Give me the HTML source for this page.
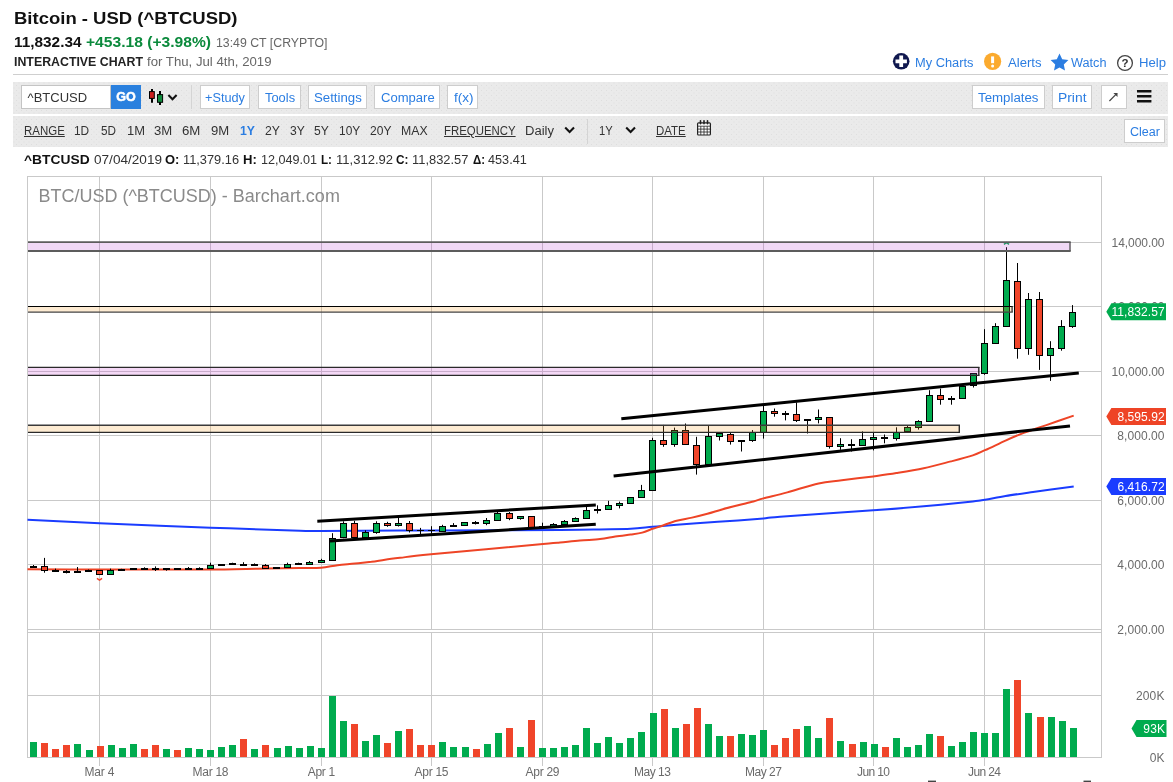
<!DOCTYPE html>
<html lang="en"><head><meta charset="utf-8"><title>Bitcoin - USD (^BTCUSD) Interactive Chart</title>
<style>
html,body{margin:0;padding:0;background:#fff;}
body{width:1173px;height:782px;position:relative;overflow:hidden;font-family:"Liberation Sans", sans-serif;}
.t{position:absolute;white-space:nowrap;transform-origin:0 0;}
.b{position:absolute;display:block;}
</style></head><body><div id="wrap" style="position:absolute;left:0;top:0;width:1173px;height:782px;will-change:transform;">
<header class="quote-header">
<span class="t" style="left:13.90px;top:10px;font-size:17.25px;line-height:17.25px;color:#111;font-weight:bold;transform:scaleX(1.0723);">Bitcoin - USD (^BTCUSD)</span>
<span class="t" style="left:13.90px;top:35px;font-size:14.5px;line-height:14.5px;color:#111;font-weight:bold;transform:scaleX(1.0595);">11,832.34</span>
<span class="t" style="left:86.30px;top:35px;font-size:14.5px;line-height:14.5px;color:#0b8a3c;font-weight:bold;transform:scaleX(1.0768);">+453.18 (+3.98%)</span>
<span class="t" style="left:216.30px;top:37px;font-size:12px;line-height:12px;color:#666;transform:scaleX(1.0256);">13:49 CT [CRYPTO]</span>
<span class="t" style="left:13.90px;top:56px;font-size:12px;line-height:12px;color:#222;font-weight:bold;transform:scaleX(1.0293);">INTERACTIVE CHART</span>
<span class="t" style="left:146.50px;top:56px;font-size:12px;line-height:12px;color:#666;transform:scaleX(1.1000);">for Thu, Jul 4th, 2019</span>
<svg class="b" style="left:892px;top:52px" width="19" height="19" viewBox="0 0 19 19"><circle cx="9.2" cy="9.3" r="8.3" fill="#10184f"/><path d="M9.2 3.6v11.4M3.5 9.3h11.4" stroke="#fff" stroke-width="3.8"/></svg>
<span class="t" style="left:915.00px;top:57px;font-size:12.5px;line-height:12.5px;color:#2b7de1;transform:scaleX(1.0272);">My Charts</span>
<svg class="b" style="left:983px;top:52px" width="20" height="19" viewBox="0 0 20 19"><circle cx="9.6" cy="9.3" r="8.6" fill="#fbaa2e"/><path d="M9.6 4.4v6.8" stroke="#fff" stroke-width="3"/><circle cx="9.6" cy="13.9" r="1.5" fill="#fff"/></svg>
<span class="t" style="left:1007.50px;top:57px;font-size:12.5px;line-height:12.5px;color:#2b7de1;transform:scaleX(1.0485);">Alerts</span>
<svg class="b" style="left:1050px;top:53px" width="19" height="18" viewBox="0 0 19 18"><path d="M9.5 0.6l2.7 5.7 6.2 0.8-4.6 4.3 1.2 6.2-5.5-3.1-5.5 3.1 1.2-6.2L0.6 7.1l6.2-0.8z" fill="#2b7de1"/></svg>
<span class="t" style="left:1071.20px;top:57px;font-size:12.5px;line-height:12.5px;color:#2b7de1;transform:scaleX(1.0154);">Watch</span>
<svg class="b" style="left:1116px;top:53.5px" width="18" height="18" viewBox="0 0 18 18"><circle cx="9" cy="9" r="7.4" fill="#fff" stroke="#444" stroke-width="1.3"/><text x="9" y="13.2" font-family="Liberation Sans, sans-serif" font-size="11.5" font-weight="bold" fill="#333" text-anchor="middle">?</text></svg>
<span class="t" style="left:1138.70px;top:57px;font-size:12.5px;line-height:12.5px;color:#2b7de1;transform:scaleX(1.0503);">Help</span>
</header>
<div class="chart-toolbar">
<div class="b" style="left:13px;top:74px;width:1155px;height:1px;background:#cfcfcf;"></div>
<div class="b" style="left:13px;top:82px;width:1155px;height:32px;background-color:#eaeaea;background-image:radial-gradient(circle,#dedede 0.55px,transparent 0.9px),radial-gradient(circle,#dedede 0.55px,transparent 0.9px);background-size:5px 5px;background-position:1px 1px,3.5px 3.5px;"></div>
<div class="b" style="left:13px;top:116px;width:1155px;height:31px;background-color:#eaeaea;background-image:radial-gradient(circle,#dedede 0.55px,transparent 0.9px),radial-gradient(circle,#dedede 0.55px,transparent 0.9px);background-size:5px 5px;background-position:1px 1px,3.5px 3.5px;"></div>
<div class="b" style="left:21px;top:85px;width:90px;height:24px;background:#fff;border:1px solid #c4c4c4;box-sizing:border-box;"></div>
<span class="t" style="left:27.60px;top:91px;font-size:13px;line-height:13px;color:#333;">^BTCUSD</span>
<div class="b" style="left:110.8px;top:85px;width:30.2px;height:24px;background:#2a80de;"></div>
<span class="t" style="left:116.20px;top:91px;font-size:12.5px;line-height:12.5px;color:#fff;font-weight:bold;-webkit-text-stroke:0.5px #fff;">GO</span>
<svg class="b" style="left:147px;top:88px" width="34" height="18" viewBox="0 0 34 18"><path d="M5 1v13.8" stroke="#000" stroke-width="2"/><rect x="2.5" y="3.6" width="4.8" height="6.8" fill="#cc1f1f" stroke="#000" stroke-width="1"/><path d="M13 3.1v13.8" stroke="#000" stroke-width="2"/><rect x="10.5" y="6.6" width="5.1" height="7.7" fill="#118a3c" stroke="#000" stroke-width="1"/><path d="M21.4 7.1l4.1 4.1 4.1-4.1" fill="none" stroke="#111" stroke-width="2.1"/></svg>
<div class="b" style="left:191px;top:85px;width:1px;height:24px;background:#d4d4d4;"></div>
<div class="b" style="left:199.5px;top:85px;width:50.900000000000006px;height:24px;background:#fff;border:1px solid #cdcdcd;box-sizing:border-box;"></div>
<span class="t" style="left:205.30px;top:92px;font-size:12.5px;line-height:12.5px;color:#2b7de1;transform:scaleX(1.0162);">+Study</span>
<div class="b" style="left:258.4px;top:85px;width:42.200000000000045px;height:24px;background:#fff;border:1px solid #cdcdcd;box-sizing:border-box;"></div>
<span class="t" style="left:265.00px;top:92px;font-size:12.5px;line-height:12.5px;color:#2b7de1;transform:scaleX(1.0315);">Tools</span>
<div class="b" style="left:308.3px;top:85px;width:59.19999999999999px;height:24px;background:#fff;border:1px solid #cdcdcd;box-sizing:border-box;"></div>
<span class="t" style="left:313.60px;top:92px;font-size:12.5px;line-height:12.5px;color:#2b7de1;transform:scaleX(1.0583);">Settings</span>
<div class="b" style="left:374.3px;top:85px;width:66.19999999999999px;height:24px;background:#fff;border:1px solid #cdcdcd;box-sizing:border-box;"></div>
<span class="t" style="left:380.70px;top:92px;font-size:12.5px;line-height:12.5px;color:#2b7de1;transform:scaleX(1.0445);">Compare</span>
<div class="b" style="left:447.3px;top:85px;width:31.099999999999966px;height:24px;background:#fff;border:1px solid #cdcdcd;box-sizing:border-box;"></div>
<span class="t" style="left:453.50px;top:92px;font-size:12.5px;line-height:12.5px;color:#2b7de1;transform:scaleX(1.0804);">f(x)</span>
<div class="b" style="left:971.5px;top:85px;width:73.0px;height:24px;background:#fff;border:1px solid #cdcdcd;box-sizing:border-box;"></div>
<span class="t" style="left:978.00px;top:92px;font-size:12.5px;line-height:12.5px;color:#2b7de1;transform:scaleX(1.0620);">Templates</span>
<div class="b" style="left:1051.5px;top:85px;width:40.5px;height:24px;background:#fff;border:1px solid #cdcdcd;box-sizing:border-box;"></div>
<span class="t" style="left:1057.50px;top:92px;font-size:12.5px;line-height:12.5px;color:#2b7de1;transform:scaleX(1.1089);">Print</span>
<div class="b" style="left:1100.7px;top:85px;width:26px;height:24px;background:#fff;border:1px solid #cdcdcd;box-sizing:border-box;"></div>
<svg class="b" style="left:1106px;top:90px" width="15" height="14" viewBox="0 0 15 14"><path d="M3.4 11L11 3.4" stroke="#444" stroke-width="1.2"/><path d="M7.4 2.9h4.1v4.1z" fill="#444"/></svg>
<svg class="b" style="left:1137px;top:89px" width="15" height="15" viewBox="0 0 15 15"><path d="M0 2.3h14.4M0 7.3h14.4M0 12.3h14.4" stroke="#111" stroke-width="2.6"/></svg>
<div class="b" style="left:1123.7px;top:119px;width:41.299999999999955px;height:24px;background:#fff;border:1px solid #cdcdcd;box-sizing:border-box;"></div>
<span class="t" style="left:1129.50px;top:126px;font-size:12.5px;line-height:12.5px;color:#2b7de1;transform:scaleX(1.0043);">Clear</span>
<span class="t" style="left:23.90px;top:125px;font-size:12.5px;line-height:12.5px;color:#333;transform:scaleX(0.9178);text-decoration:underline;">RANGE</span>
<span class="t" style="left:74.30px;top:125px;font-size:12.5px;line-height:12.5px;color:#333;transform:scaleX(0.9512);">1D</span>
<span class="t" style="left:100.50px;top:125px;font-size:12.5px;line-height:12.5px;color:#333;transform:scaleX(0.9387);">5D</span>
<span class="t" style="left:126.50px;top:125px;font-size:12.5px;line-height:12.5px;color:#333;transform:scaleX(1.0366);">1M</span>
<span class="t" style="left:154.30px;top:125px;font-size:12.5px;line-height:12.5px;color:#333;transform:scaleX(1.0481);">3M</span>
<span class="t" style="left:182.40px;top:125px;font-size:12.5px;line-height:12.5px;color:#333;transform:scaleX(1.0596);">6M</span>
<span class="t" style="left:211.00px;top:125px;font-size:12.5px;line-height:12.5px;color:#333;transform:scaleX(1.0481);">9M</span>
<span class="t" style="left:239.60px;top:125px;font-size:12.5px;line-height:12.5px;color:#2b7de1;font-weight:bold;transform:scaleX(0.9745);">1Y</span>
<span class="t" style="left:264.60px;top:125px;font-size:12.5px;line-height:12.5px;color:#333;transform:scaleX(0.9745);">2Y</span>
<span class="t" style="left:289.50px;top:125px;font-size:12.5px;line-height:12.5px;color:#333;transform:scaleX(0.9680);">3Y</span>
<span class="t" style="left:314.40px;top:125px;font-size:12.5px;line-height:12.5px;color:#333;transform:scaleX(0.9680);">5Y</span>
<span class="t" style="left:339.30px;top:125px;font-size:12.5px;line-height:12.5px;color:#333;transform:scaleX(0.9532);">10Y</span>
<span class="t" style="left:369.60px;top:125px;font-size:12.5px;line-height:12.5px;color:#333;transform:scaleX(0.9622);">20Y</span>
<span class="t" style="left:401.10px;top:125px;font-size:12.5px;line-height:12.5px;color:#333;transform:scaleX(0.9820);">MAX</span>
<span class="t" style="left:444.10px;top:125px;font-size:12.5px;line-height:12.5px;color:#333;transform:scaleX(0.9123);text-decoration:underline;">FREQUENCY</span>
<span class="t" style="left:524.90px;top:125px;font-size:12.5px;line-height:12.5px;color:#333;transform:scaleX(1.0438);">Daily</span>
<svg class="b" style="left:563px;top:125px" width="14" height="10" viewBox="0 0 14 10"><path d="M2.2 2.6l4.4 4.4 4.4-4.4" fill="none" stroke="#111" stroke-width="2.1"/></svg>
<div class="b" style="left:587px;top:119px;width:1px;height:25px;background:#d4d4d4;"></div>
<span class="t" style="left:598.90px;top:125px;font-size:12.5px;line-height:12.5px;color:#333;transform:scaleX(0.8961);">1Y</span>
<svg class="b" style="left:623.5px;top:125px" width="14" height="10" viewBox="0 0 14 10"><path d="M2.2 2.6l4.4 4.4 4.4-4.4" fill="none" stroke="#111" stroke-width="2.1"/></svg>
<span class="t" style="left:655.50px;top:125px;font-size:12.5px;line-height:12.5px;color:#333;transform:scaleX(0.9164);text-decoration:underline;">DATE</span>
<svg class="b" style="left:696px;top:120px" width="16" height="17" viewBox="0 0 16 17"><rect x="1.6" y="2.8" width="12.8" height="12.2" rx="1" fill="#fff" stroke="#222" stroke-width="1.2"/><path d="M1.6 6.2h12.8M4.8 6.2v8.8M8 6.2v8.8M11.2 6.2v8.8M1.6 9.1h12.8M1.6 12h12.8" stroke="#222" stroke-width="0.8"/><path d="M4.5 0.8v3M8 0.8v3M11.5 0.8v3" stroke="#222" stroke-width="1.6" stroke-linecap="round"/></svg>
</div>
<div class="ohlc-legend">
<span class="t" style="left:23.60px;top:153px;font-size:13px;line-height:13px;color:#111;font-weight:bold;transform:scaleX(1.0622);">^BTCUSD</span>
<span class="t" style="left:93.50px;top:154px;font-size:12.5px;line-height:12.5px;color:#333;transform:scaleX(1.0869);">07/04/2019</span>
<span class="t" style="left:165.20px;top:154px;font-size:12.5px;line-height:12.5px;color:#111;font-weight:bold;transform:scaleX(1.0371);">O:</span>
<span class="t" style="left:183.20px;top:154px;font-size:12.5px;line-height:12.5px;color:#333;transform:scaleX(1.0241);">11,379.16</span>
<span class="t" style="left:243.20px;top:154px;font-size:12.5px;line-height:12.5px;color:#111;font-weight:bold;transform:scaleX(1.0463);">H:</span>
<span class="t" style="left:260.90px;top:154px;font-size:12.5px;line-height:12.5px;color:#333;transform:scaleX(1.0088);">12,049.01</span>
<span class="t" style="left:321.00px;top:154px;font-size:12.5px;line-height:12.5px;color:#111;font-weight:bold;transform:scaleX(0.9324);">L:</span>
<span class="t" style="left:335.60px;top:154px;font-size:12.5px;line-height:12.5px;color:#333;transform:scaleX(1.0424);">11,312.92</span>
<span class="t" style="left:396.20px;top:154px;font-size:12.5px;line-height:12.5px;color:#111;font-weight:bold;transform:scaleX(0.9401);">C:</span>
<span class="t" style="left:412.10px;top:154px;font-size:12.5px;line-height:12.5px;color:#333;transform:scaleX(1.0314);">11,832.57</span>
<span class="t" style="left:472.60px;top:154px;font-size:12.5px;line-height:12.5px;color:#111;font-weight:bold;transform:scaleX(0.9128);">Δ:</span>
<span class="t" style="left:488.20px;top:154px;font-size:12.5px;line-height:12.5px;color:#333;transform:scaleX(1.0148);">453.41</span>
</div>
<svg class="b" style="left:0;top:170px" width="1173" height="612" viewBox="0 170 1173 612" font-family="Liberation Sans, sans-serif">
<g stroke="#c9c9c9" stroke-width="1" shape-rendering="crispEdges" fill="none">
<path d="M99.5 176.5V629.5M99.5 632.5V766"/>
<path d="M210.5 176.5V629.5M210.5 632.5V766"/>
<path d="M321.5 176.5V629.5M321.5 632.5V766"/>
<path d="M431.5 176.5V629.5M431.5 632.5V766"/>
<path d="M542.5 176.5V629.5M542.5 632.5V766"/>
<path d="M652.5 176.5V629.5M652.5 632.5V766"/>
<path d="M763.5 176.5V629.5M763.5 632.5V766"/>
<path d="M873.5 176.5V629.5M873.5 632.5V766"/>
<path d="M984.5 176.5V629.5M984.5 632.5V766"/>
<path d="M27.5 242.5H1101.5"/>
<path d="M27.5 306.5H1101.5"/>
<path d="M27.5 371.5H1101.5"/>
<path d="M27.5 435.5H1101.5"/>
<path d="M27.5 500.5H1101.5"/>
<path d="M27.5 564.5H1101.5"/>
<path d="M27.5 176.5H1101.5V629.5H27.5Z"/>
<path d="M27.5 632.5H1101.5V757.5H27.5Z"/><path d="M27.5 629V633M1101.5 629V633"/>
<path d="M27.5 695.5H1101.5"/>
</g>
<text x="38.4" y="201.9" font-size="17.5" fill="#8a8a8a" textLength="301.5" lengthAdjust="spacingAndGlyphs">BTC/USD (^BTCUSD) - Barchart.com</text>
<path d="M27.5 519.7C39.5 520.3 69.0 522.0 99.5 523.3C130.0 524.6 177.1 526.5 210.5 527.7C243.9 528.9 281.6 530.2 300.0 530.7C318.4 531.2 304.3 531.0 321.0 531.0C337.7 531.0 381.7 530.7 400.0 530.6C418.3 530.5 404.3 530.5 431.0 530.4C457.7 530.3 531.8 530.1 560.0 529.9C588.2 529.7 588.2 529.6 600.0 529.4C611.8 529.2 621.9 529.2 630.7 528.8C639.5 528.4 644.9 527.5 652.6 526.8C660.3 526.1 667.6 525.5 676.7 524.8C685.8 524.1 697.2 523.2 707.4 522.5C717.6 521.8 728.6 521.1 738.0 520.4C747.4 519.7 756.5 519.0 763.5 518.4C770.5 517.8 761.7 518.1 780.0 516.8C798.3 515.4 849.2 512.0 873.2 510.3C897.2 508.6 907.1 507.8 923.7 506.3C940.3 504.8 962.6 502.6 972.8 501.5C983.0 500.4 979.5 500.6 985.0 499.7C990.5 498.8 997.5 497.3 1005.5 496.0C1013.5 494.7 1021.6 493.6 1033.0 492.0C1044.4 490.4 1066.9 487.4 1073.7 486.5" fill="none" stroke="#1a3cff" stroke-width="2.0" stroke-linejoin="round"/>
<path d="M27.5 569.3C39.5 569.3 77.4 569.5 99.5 569.5C121.6 569.5 141.6 569.5 160.0 569.5C178.4 569.5 192.3 569.6 210.0 569.5C227.7 569.4 251.0 568.8 266.0 568.6C281.0 568.4 290.8 568.2 300.0 568.1C309.2 568.0 314.7 568.3 321.0 567.8C327.3 567.3 331.9 565.9 337.6 565.2C343.3 564.5 349.4 564.2 355.0 563.6C360.6 563.0 366.4 562.4 371.4 561.8C376.4 561.1 380.2 560.4 385.0 559.7C389.8 559.0 392.3 558.7 400.0 557.8C407.7 556.9 407.2 556.6 431.0 554.3C454.8 552.0 521.5 545.9 543.0 543.9C564.5 541.9 553.8 543.1 560.0 542.5C566.2 541.9 573.3 541.1 580.0 540.5C586.7 539.9 594.1 539.8 600.0 539.1C605.9 538.4 610.2 537.3 615.3 536.5C620.4 535.7 626.2 535.1 630.7 534.5C635.2 533.9 638.6 533.6 642.2 532.6C645.9 531.6 649.4 529.9 652.6 528.8C655.8 527.7 657.4 527.4 661.4 526.0C665.4 524.6 671.6 522.1 676.7 520.7C681.8 519.3 686.9 518.8 692.0 517.6C697.1 516.5 702.3 515.2 707.4 513.8C712.5 512.4 717.7 510.6 722.8 509.2C727.9 507.8 733.0 506.6 738.1 505.3C743.2 504.0 749.2 502.6 753.4 501.5C757.6 500.4 757.8 499.9 763.4 498.4C769.0 496.9 778.1 494.9 787.3 492.4C796.5 489.9 809.5 485.4 818.6 483.4C827.7 481.4 832.7 481.5 841.8 480.3C850.9 479.1 864.1 477.6 873.2 476.4C882.3 475.2 888.0 474.5 896.4 473.1C904.8 471.7 914.6 470.1 923.7 468.2C932.8 466.2 942.8 463.5 951.0 461.4C959.2 459.3 967.1 457.3 972.8 455.4C978.5 453.5 979.5 452.7 985.0 450.2C990.5 447.7 999.4 443.4 1005.5 440.6C1011.6 437.8 1015.1 436.2 1021.9 433.6C1028.7 431.0 1037.8 428.1 1046.4 425.1C1055.0 422.1 1069.2 417.2 1073.7 415.6" fill="none" stroke="#ee4426" stroke-width="2.0" stroke-linejoin="round"/>
<g stroke="#000" stroke-width="1">
<path d="M33.5 565.0V567.3"/>
<rect x="30.0" y="566" width="7" height="2" fill="#000" stroke="none"/>
<path d="M44.5 557.9V572.7"/>
<rect x="41.5" y="566.5" width="6" height="4" fill="#f0452a"/>
<path d="M55.5 568.6V571.5"/>
<rect x="52.0" y="570" width="7" height="2" fill="#000" stroke="none"/>
<path d="M66.5 570.0V573.4"/>
<rect x="63.0" y="571" width="7" height="2" fill="#000" stroke="none"/>
<path d="M77.5 567.0V572.4"/>
<rect x="74.0" y="571" width="7" height="2" fill="#000" stroke="none"/>
<path d="M88.5 569.5V571.5"/>
<rect x="85.0" y="570" width="7" height="2" fill="#000" stroke="none"/>
<path d="M99.5 570.2V574.6"/>
<rect x="96.5" y="570.5" width="6" height="4" fill="#f0452a"/>
<path d="M110.5 568.6V574.6"/>
<rect x="107.5" y="570.5" width="6" height="4" fill="#00ab4e"/>
<path d="M121.5 568.8V570.7"/>
<rect x="118.0" y="569" width="7" height="2" fill="#000" stroke="none"/>
<path d="M133.5 568.3V569.5"/>
<rect x="130.0" y="568" width="7" height="2" fill="#000" stroke="none"/>
<path d="M144.5 567.3V569.3"/>
<rect x="141.0" y="568" width="7" height="2" fill="#000" stroke="none"/>
<path d="M155.5 566.4V571.0"/>
<rect x="152.0" y="568" width="7" height="2" fill="#000" stroke="none"/>
<path d="M166.5 568.1V570.7"/>
<rect x="163.0" y="568" width="7" height="2" fill="#000" stroke="none"/>
<path d="M177.5 568.5V570.0"/>
<rect x="174.0" y="568" width="7" height="2" fill="#000" stroke="none"/>
<path d="M188.5 567.0V570.0"/>
<rect x="185.0" y="568" width="7" height="2" fill="#000" stroke="none"/>
<path d="M199.5 567.3V569.5"/>
<rect x="196.0" y="568" width="7" height="2" fill="#000" stroke="none"/>
<path d="M210.5 562.7V568.6"/>
<rect x="207.5" y="565.5" width="6" height="3" fill="#00ab4e"/>
<path d="M221.5 564.0V565.5"/>
<rect x="218.0" y="564" width="7" height="2" fill="#000" stroke="none"/>
<path d="M232.5 562.7V564.8"/>
<rect x="229.0" y="563" width="7" height="2" fill="#000" stroke="none"/>
<path d="M243.5 562.2V565.3"/>
<rect x="240.0" y="564" width="7" height="2" fill="#000" stroke="none"/>
<path d="M254.5 563.4V565.5"/>
<rect x="251.0" y="564" width="7" height="2" fill="#000" stroke="none"/>
<path d="M265.5 564.1V568.6"/>
<rect x="262.5" y="565.5" width="6" height="3" fill="#f0452a"/>
<path d="M276.5 567.0V568.5"/>
<rect x="273.0" y="567" width="7" height="2" fill="#000" stroke="none"/>
<path d="M287.5 562.7V567.5"/>
<rect x="284.5" y="564.5" width="6" height="3" fill="#00ab4e"/>
<path d="M298.5 562.7V564.8"/>
<rect x="295.0" y="563" width="7" height="2" fill="#000" stroke="none"/>
<path d="M309.5 561.0V564.5"/>
<rect x="306.5" y="562.5" width="6" height="2" fill="#00ab4e"/>
<path d="M321.5 558.8V562.4"/>
<rect x="318.5" y="560.5" width="6" height="2" fill="#00ab4e"/>
<path d="M332.5 533.2V560.8"/>
<rect x="329.5" y="538.5" width="6" height="22" fill="#00ab4e"/>
<path d="M343.5 521.3V538.2"/>
<rect x="340.5" y="523.5" width="6" height="14" fill="#00ab4e"/>
<path d="M354.5 520.8V538.8"/>
<rect x="351.5" y="523.5" width="6" height="14" fill="#f0452a"/>
<path d="M365.5 530.3V537.6"/>
<rect x="362.5" y="532.5" width="6" height="5" fill="#00ab4e"/>
<path d="M376.5 521.3V533.8"/>
<rect x="373.5" y="523.5" width="6" height="9" fill="#00ab4e"/>
<path d="M387.5 521.8V526.8"/>
<rect x="384.5" y="523.5" width="6" height="2" fill="#f0452a"/>
<path d="M398.5 517.6V526.5"/>
<rect x="395.5" y="523.5" width="6" height="2" fill="#00ab4e"/>
<path d="M409.5 521.0V532.5"/>
<rect x="406.5" y="523.5" width="6" height="7" fill="#f0452a"/>
<path d="M420.5 527.9V534.2"/>
<rect x="417.0" y="530" width="7" height="1" fill="#000" stroke="none"/>
<path d="M431.5 526.2V533.7"/>
<rect x="428.0" y="530" width="7" height="1" fill="#000" stroke="none"/>
<path d="M442.5 524.8V531.7"/>
<rect x="439.5" y="526.5" width="6" height="5" fill="#00ab4e"/>
<path d="M453.5 523.1V526.5"/>
<rect x="450.0" y="525" width="7" height="2" fill="#000" stroke="none"/>
<path d="M464.5 522.4V525.5"/>
<rect x="461.5" y="522.5" width="6" height="3" fill="#00ab4e"/>
<path d="M475.5 521.0V524.5"/>
<rect x="472.0" y="522" width="7" height="2" fill="#000" stroke="none"/>
<path d="M486.5 518.0V525.2"/>
<rect x="483.5" y="520.5" width="6" height="3" fill="#00ab4e"/>
<path d="M497.5 511.7V520.7"/>
<rect x="494.5" y="513.5" width="6" height="7" fill="#00ab4e"/>
<path d="M509.5 512.0V520.2"/>
<rect x="506.5" y="513.5" width="6" height="5" fill="#f0452a"/>
<path d="M520.5 516.6V519.7"/>
<rect x="517.5" y="516.5" width="6" height="2" fill="#00ab4e"/>
<path d="M531.5 516.2V527.5"/>
<rect x="528.5" y="516.5" width="6" height="11" fill="#f0452a"/>
<path d="M542.5 522.7V527.3"/>
<rect x="539.0" y="526" width="7" height="2" fill="#000" stroke="none"/>
<path d="M553.5 523.1V526.5"/>
<rect x="550.5" y="524.5" width="6" height="2" fill="#00ab4e"/>
<path d="M564.5 520.0V524.6"/>
<rect x="561.5" y="521.5" width="6" height="3" fill="#00ab4e"/>
<path d="M575.5 517.3V521.8"/>
<rect x="572.5" y="518.5" width="6" height="3" fill="#00ab4e"/>
<path d="M586.5 506.3V518.6"/>
<rect x="583.5" y="510.5" width="6" height="8" fill="#00ab4e"/>
<path d="M597.5 505.3V513.5"/>
<rect x="594.0" y="509" width="7" height="2" fill="#000" stroke="none"/>
<path d="M608.5 500.8V509.9"/>
<rect x="605.5" y="505.5" width="6" height="4" fill="#00ab4e"/>
<path d="M619.5 501.6V508.4"/>
<rect x="616.5" y="503.5" width="6" height="2" fill="#00ab4e"/>
<path d="M630.5 497.2V503.7"/>
<rect x="627.5" y="497.5" width="6" height="6" fill="#00ab4e"/>
<path d="M641.5 484.9V497.6"/>
<rect x="638.5" y="490.5" width="6" height="7" fill="#00ab4e"/>
<path d="M652.5 437.8V490.6"/>
<rect x="649.5" y="440.5" width="6" height="50" fill="#00ab4e"/>
<path d="M663.5 424.9V446.8"/>
<rect x="660.5" y="440.5" width="6" height="4" fill="#f0452a"/>
<path d="M674.5 427.6V446.8"/>
<rect x="671.5" y="430.5" width="6" height="14" fill="#00ab4e"/>
<path d="M685.5 423.5V444.9"/>
<rect x="682.5" y="430.5" width="6" height="14" fill="#f0452a"/>
<path d="M696.5 436.8V474.6"/>
<rect x="693.5" y="445.5" width="6" height="19" fill="#f0452a"/>
<path d="M708.5 425.6V464.8"/>
<rect x="705.5" y="436.5" width="6" height="28" fill="#00ab4e"/>
<path d="M719.5 432.3V440.5"/>
<rect x="716.5" y="433.5" width="6" height="3" fill="#00ab4e"/>
<path d="M730.5 432.7V444.6"/>
<rect x="727.5" y="434.5" width="6" height="7" fill="#f0452a"/>
<path d="M741.5 440.3V451.5"/>
<rect x="738.0" y="440" width="7" height="2" fill="#000" stroke="none"/>
<path d="M752.5 430.0V441.9"/>
<rect x="749.5" y="432.5" width="6" height="8" fill="#00ab4e"/>
<path d="M763.5 405.8V438.6"/>
<rect x="760.5" y="411.5" width="6" height="21" fill="#00ab4e"/>
<path d="M774.5 408.5V416.7"/>
<rect x="771.5" y="411.5" width="6" height="2" fill="#f0452a"/>
<path d="M785.5 411.0V420.4"/>
<rect x="782.0" y="413" width="7" height="2" fill="#000" stroke="none"/>
<path d="M796.5 402.4V422.0"/>
<rect x="793.5" y="414.5" width="6" height="6" fill="#f0452a"/>
<path d="M807.5 419.3V433.5"/>
<rect x="804.0" y="419" width="7" height="2" fill="#000" stroke="none"/>
<path d="M818.5 409.5V423.4"/>
<rect x="815.5" y="417.5" width="6" height="2" fill="#00ab4e"/>
<path d="M829.5 417.3V448.6"/>
<rect x="826.5" y="417.5" width="6" height="29" fill="#f0452a"/>
<path d="M840.5 438.2V449.8"/>
<rect x="837.5" y="444.5" width="6" height="2" fill="#00ab4e"/>
<path d="M851.5 439.2V451.5"/>
<rect x="848.0" y="444" width="7" height="2" fill="#000" stroke="none"/>
<path d="M862.5 431.4V445.6"/>
<rect x="859.5" y="439.5" width="6" height="6" fill="#00ab4e"/>
<path d="M873.5 432.0V450.4"/>
<rect x="870.5" y="437.5" width="6" height="2" fill="#00ab4e"/>
<path d="M884.5 434.5V443.3"/>
<rect x="881.0" y="437" width="7" height="2" fill="#000" stroke="none"/>
<path d="M896.5 427.3V440.6"/>
<rect x="893.5" y="432.5" width="6" height="6" fill="#00ab4e"/>
<path d="M907.5 425.9V432.5"/>
<rect x="904.5" y="427.5" width="6" height="4" fill="#00ab4e"/>
<path d="M918.5 420.2V429.6"/>
<rect x="915.5" y="421.5" width="6" height="6" fill="#00ab4e"/>
<path d="M929.5 390.2V421.6"/>
<rect x="926.5" y="395.5" width="6" height="26" fill="#00ab4e"/>
<path d="M940.5 388.6V404.7"/>
<rect x="937.5" y="395.5" width="6" height="4" fill="#f0452a"/>
<path d="M951.5 396.0V404.7"/>
<rect x="948.0" y="398" width="7" height="2" fill="#000" stroke="none"/>
<path d="M962.5 386.0V398.6"/>
<rect x="959.5" y="386.5" width="6" height="12" fill="#00ab4e"/>
<path d="M973.5 373.3V387.5"/>
<rect x="970.5" y="373.5" width="6" height="12" fill="#00ab4e"/>
<path d="M984.5 329.2V374.8"/>
<rect x="981.5" y="343.5" width="6" height="30" fill="#00ab4e"/>
<path d="M995.5 323.2V343.5"/>
<rect x="992.5" y="326.5" width="6" height="17" fill="#00ab4e"/>
<path d="M1006.5 247.2V326.8"/>
<rect x="1003.5" y="280.5" width="6" height="46" fill="#00ab4e"/>
<path d="M1017.5 263.0V358.7"/>
<rect x="1014.5" y="281.5" width="6" height="67" fill="#f0452a"/>
<path d="M1028.5 293.0V354.8"/>
<rect x="1025.5" y="299.5" width="6" height="49" fill="#00ab4e"/>
<path d="M1039.5 292.0V369.9"/>
<rect x="1036.5" y="299.5" width="6" height="56" fill="#f0452a"/>
<path d="M1050.5 341.2V380.9"/>
<rect x="1047.5" y="348.5" width="6" height="7" fill="#00ab4e"/>
<path d="M1061.5 320.1V350.7"/>
<rect x="1058.5" y="326.5" width="6" height="22" fill="#00ab4e"/>
<path d="M1072.5 305.1V327.9"/>
<rect x="1069.5" y="312.5" width="6" height="14" fill="#00ab4e"/>
</g>
<path d="M1003.9 244.4l2.6-1.7 2.6 1.7" fill="none" stroke="#00ab4e" stroke-width="1.5"/>
<path d="M96.9 578.4l2.6 1.7 2.6-1.7" fill="none" stroke="#f0452a" stroke-width="1.5"/>
<rect x="28" y="242.1" width="1042.7" height="8.900000000000006" fill="#b43ccd" fill-opacity="0.2"/>
<path d="M28 242.1H1070.7" stroke="#5c5c5c" stroke-width="1.8"/><path d="M28 251.0H1070.7" stroke="#5c5c5c" stroke-width="1.8"/><path d="M1070.0 242.1V251.0" stroke="#5c5c5c" stroke-width="1.4"/>
<rect x="28" y="306.5" width="984.8" height="5.600000000000023" fill="#f59b1e" fill-opacity="0.2"/>
<path d="M28 306.5H1012.8" stroke="#000" stroke-width="1.1"/><path d="M28 312.1H1012.8" stroke="#444" stroke-width="1.1"/><path d="M1012.0999999999999 306.5V312.1" stroke="#444" stroke-width="1.4"/>
<rect x="28" y="367.3" width="951.5" height="8.099999999999966" fill="#c83cd2" fill-opacity="0.2"/>
<path d="M28 367.3H979.5" stroke="#2a2a2a" stroke-width="1.3"/><path d="M28 375.4H979.5" stroke="#2a2a2a" stroke-width="1.3"/><path d="M978.8 367.3V375.4" stroke="#2a2a2a" stroke-width="1.4"/>
<rect x="28" y="425.3" width="932" height="7.099999999999966" fill="#f59b1e" fill-opacity="0.2"/>
<path d="M28 425.3H960" stroke="#3a3a3a" stroke-width="1.4"/><path d="M28 432.4H960" stroke="#2a2a2a" stroke-width="1.4"/><path d="M959.3 425.3V432.4" stroke="#2a2a2a" stroke-width="1.4"/>
<path d="M317.3 521.3L595.8 504.9" stroke="#000" stroke-width="3.0"/>
<path d="M330 541L595.8 524.3" stroke="#000" stroke-width="3.0"/>
<path d="M621.3 418.8L1078.8 372.9" stroke="#000" stroke-width="3.0"/>
<path d="M613.6 476.1L1070 425.9" stroke="#000" stroke-width="3.0"/>
<rect x="30.0" y="741.9" width="7" height="15.1" fill="#00ab4e" shape-rendering="crispEdges"/>
<rect x="41.0" y="742.9" width="7" height="14.1" fill="#f0452a" shape-rendering="crispEdges"/>
<rect x="52.0" y="749.0" width="7" height="8.0" fill="#f0452a" shape-rendering="crispEdges"/>
<rect x="63.0" y="745.0" width="7" height="12.0" fill="#f0452a" shape-rendering="crispEdges"/>
<rect x="74.0" y="743.9" width="7" height="13.1" fill="#00ab4e" shape-rendering="crispEdges"/>
<rect x="86.0" y="750.0" width="7" height="7.0" fill="#00ab4e" shape-rendering="crispEdges"/>
<rect x="97.0" y="746.0" width="7" height="11.0" fill="#f0452a" shape-rendering="crispEdges"/>
<rect x="108.0" y="745.0" width="7" height="12.0" fill="#00ab4e" shape-rendering="crispEdges"/>
<rect x="119.0" y="748.0" width="7" height="9.0" fill="#00ab4e" shape-rendering="crispEdges"/>
<rect x="130.0" y="744.0" width="7" height="13.0" fill="#00ab4e" shape-rendering="crispEdges"/>
<rect x="141.0" y="749.0" width="7" height="8.0" fill="#f0452a" shape-rendering="crispEdges"/>
<rect x="152.0" y="745.0" width="7" height="12.0" fill="#f0452a" shape-rendering="crispEdges"/>
<rect x="163.0" y="749.0" width="7" height="8.0" fill="#00ab4e" shape-rendering="crispEdges"/>
<rect x="174.0" y="750.0" width="7" height="7.0" fill="#f0452a" shape-rendering="crispEdges"/>
<rect x="185.0" y="748.0" width="7" height="9.0" fill="#00ab4e" shape-rendering="crispEdges"/>
<rect x="196.0" y="749.0" width="7" height="8.0" fill="#00ab4e" shape-rendering="crispEdges"/>
<rect x="207.0" y="750.0" width="7" height="7.0" fill="#00ab4e" shape-rendering="crispEdges"/>
<rect x="218.0" y="747.0" width="7" height="10.0" fill="#00ab4e" shape-rendering="crispEdges"/>
<rect x="229.0" y="745.0" width="7" height="12.0" fill="#00ab4e" shape-rendering="crispEdges"/>
<rect x="240.0" y="739.0" width="7" height="18.0" fill="#f0452a" shape-rendering="crispEdges"/>
<rect x="251.0" y="749.0" width="7" height="8.0" fill="#00ab4e" shape-rendering="crispEdges"/>
<rect x="262.0" y="745.0" width="7" height="12.0" fill="#f0452a" shape-rendering="crispEdges"/>
<rect x="274.0" y="748.0" width="7" height="9.0" fill="#00ab4e" shape-rendering="crispEdges"/>
<rect x="285.0" y="746.0" width="7" height="11.0" fill="#00ab4e" shape-rendering="crispEdges"/>
<rect x="296.0" y="748.0" width="7" height="9.0" fill="#00ab4e" shape-rendering="crispEdges"/>
<rect x="307.0" y="746.0" width="7" height="11.0" fill="#00ab4e" shape-rendering="crispEdges"/>
<rect x="318.0" y="748.0" width="7" height="9.0" fill="#00ab4e" shape-rendering="crispEdges"/>
<rect x="329.0" y="695.9" width="7" height="61.1" fill="#00ab4e" shape-rendering="crispEdges"/>
<rect x="340.0" y="720.9" width="7" height="36.1" fill="#00ab4e" shape-rendering="crispEdges"/>
<rect x="351.0" y="724.0" width="7" height="33.0" fill="#f0452a" shape-rendering="crispEdges"/>
<rect x="362.0" y="740.9" width="7" height="16.1" fill="#00ab4e" shape-rendering="crispEdges"/>
<rect x="373.0" y="735.0" width="7" height="22.0" fill="#00ab4e" shape-rendering="crispEdges"/>
<rect x="384.0" y="742.9" width="7" height="14.1" fill="#f0452a" shape-rendering="crispEdges"/>
<rect x="395.0" y="730.9" width="7" height="26.1" fill="#00ab4e" shape-rendering="crispEdges"/>
<rect x="406.0" y="728.8" width="7" height="28.2" fill="#f0452a" shape-rendering="crispEdges"/>
<rect x="417.0" y="745.0" width="7" height="12.0" fill="#f0452a" shape-rendering="crispEdges"/>
<rect x="428.0" y="745.0" width="7" height="12.0" fill="#f0452a" shape-rendering="crispEdges"/>
<rect x="439.0" y="741.9" width="7" height="15.1" fill="#00ab4e" shape-rendering="crispEdges"/>
<rect x="450.0" y="747.0" width="7" height="10.0" fill="#00ab4e" shape-rendering="crispEdges"/>
<rect x="462.0" y="747.0" width="7" height="10.0" fill="#00ab4e" shape-rendering="crispEdges"/>
<rect x="473.0" y="749.0" width="7" height="8.0" fill="#f0452a" shape-rendering="crispEdges"/>
<rect x="484.0" y="743.9" width="7" height="13.1" fill="#00ab4e" shape-rendering="crispEdges"/>
<rect x="495.0" y="732.9" width="7" height="24.1" fill="#00ab4e" shape-rendering="crispEdges"/>
<rect x="506.0" y="727.8" width="7" height="29.2" fill="#f0452a" shape-rendering="crispEdges"/>
<rect x="517.0" y="747.0" width="7" height="10.0" fill="#00ab4e" shape-rendering="crispEdges"/>
<rect x="528.0" y="719.9" width="7" height="37.1" fill="#f0452a" shape-rendering="crispEdges"/>
<rect x="539.0" y="748.0" width="7" height="9.0" fill="#00ab4e" shape-rendering="crispEdges"/>
<rect x="550.0" y="748.0" width="7" height="9.0" fill="#00ab4e" shape-rendering="crispEdges"/>
<rect x="561.0" y="747.0" width="7" height="10.0" fill="#00ab4e" shape-rendering="crispEdges"/>
<rect x="572.0" y="745.0" width="7" height="12.0" fill="#00ab4e" shape-rendering="crispEdges"/>
<rect x="583.0" y="727.8" width="7" height="29.2" fill="#00ab4e" shape-rendering="crispEdges"/>
<rect x="594.0" y="743.0" width="7" height="14.0" fill="#00ab4e" shape-rendering="crispEdges"/>
<rect x="605.0" y="737.0" width="7" height="20.0" fill="#00ab4e" shape-rendering="crispEdges"/>
<rect x="616.0" y="743.0" width="7" height="14.0" fill="#00ab4e" shape-rendering="crispEdges"/>
<rect x="627.0" y="738.0" width="7" height="19.0" fill="#00ab4e" shape-rendering="crispEdges"/>
<rect x="638.0" y="731.9" width="7" height="25.1" fill="#00ab4e" shape-rendering="crispEdges"/>
<rect x="650.0" y="713.0" width="7" height="44.0" fill="#00ab4e" shape-rendering="crispEdges"/>
<rect x="661.0" y="708.9" width="7" height="48.1" fill="#f0452a" shape-rendering="crispEdges"/>
<rect x="672.0" y="727.8" width="7" height="29.2" fill="#00ab4e" shape-rendering="crispEdges"/>
<rect x="683.0" y="724.0" width="7" height="33.0" fill="#f0452a" shape-rendering="crispEdges"/>
<rect x="694.0" y="707.9" width="7" height="49.1" fill="#f0452a" shape-rendering="crispEdges"/>
<rect x="705.0" y="724.0" width="7" height="33.0" fill="#00ab4e" shape-rendering="crispEdges"/>
<rect x="716.0" y="736.0" width="7" height="21.0" fill="#00ab4e" shape-rendering="crispEdges"/>
<rect x="727.0" y="736.0" width="7" height="21.0" fill="#f0452a" shape-rendering="crispEdges"/>
<rect x="738.0" y="734.0" width="7" height="23.0" fill="#00ab4e" shape-rendering="crispEdges"/>
<rect x="749.0" y="735.0" width="7" height="22.0" fill="#00ab4e" shape-rendering="crispEdges"/>
<rect x="760.0" y="729.9" width="7" height="27.1" fill="#00ab4e" shape-rendering="crispEdges"/>
<rect x="771.0" y="745.0" width="7" height="12.0" fill="#f0452a" shape-rendering="crispEdges"/>
<rect x="782.0" y="738.0" width="7" height="19.0" fill="#f0452a" shape-rendering="crispEdges"/>
<rect x="793.0" y="728.8" width="7" height="28.2" fill="#f0452a" shape-rendering="crispEdges"/>
<rect x="804.0" y="726.0" width="7" height="31.0" fill="#00ab4e" shape-rendering="crispEdges"/>
<rect x="815.0" y="738.0" width="7" height="19.0" fill="#00ab4e" shape-rendering="crispEdges"/>
<rect x="826.0" y="717.9" width="7" height="39.1" fill="#f0452a" shape-rendering="crispEdges"/>
<rect x="837.0" y="740.9" width="7" height="16.1" fill="#00ab4e" shape-rendering="crispEdges"/>
<rect x="849.0" y="743.9" width="7" height="13.1" fill="#f0452a" shape-rendering="crispEdges"/>
<rect x="860.0" y="741.9" width="7" height="15.1" fill="#00ab4e" shape-rendering="crispEdges"/>
<rect x="871.0" y="744.0" width="7" height="13.0" fill="#00ab4e" shape-rendering="crispEdges"/>
<rect x="882.0" y="747.0" width="7" height="10.0" fill="#f0452a" shape-rendering="crispEdges"/>
<rect x="893.0" y="737.9" width="7" height="19.1" fill="#00ab4e" shape-rendering="crispEdges"/>
<rect x="904.0" y="747.0" width="7" height="10.0" fill="#00ab4e" shape-rendering="crispEdges"/>
<rect x="915.0" y="744.8" width="7" height="12.2" fill="#00ab4e" shape-rendering="crispEdges"/>
<rect x="926.0" y="733.9" width="7" height="23.1" fill="#00ab4e" shape-rendering="crispEdges"/>
<rect x="937.0" y="736.0" width="7" height="21.0" fill="#f0452a" shape-rendering="crispEdges"/>
<rect x="948.0" y="745.9" width="7" height="11.1" fill="#00ab4e" shape-rendering="crispEdges"/>
<rect x="959.0" y="741.9" width="7" height="15.1" fill="#00ab4e" shape-rendering="crispEdges"/>
<rect x="970.0" y="732.0" width="7" height="25.0" fill="#00ab4e" shape-rendering="crispEdges"/>
<rect x="981.0" y="732.8" width="7" height="24.2" fill="#00ab4e" shape-rendering="crispEdges"/>
<rect x="992.0" y="732.8" width="7" height="24.2" fill="#00ab4e" shape-rendering="crispEdges"/>
<rect x="1003.0" y="688.8" width="7" height="68.2" fill="#00ab4e" shape-rendering="crispEdges"/>
<rect x="1014.0" y="680.0" width="7" height="77.0" fill="#f0452a" shape-rendering="crispEdges"/>
<rect x="1025.0" y="713.1" width="7" height="43.9" fill="#00ab4e" shape-rendering="crispEdges"/>
<rect x="1037.0" y="717.1" width="7" height="39.9" fill="#f0452a" shape-rendering="crispEdges"/>
<rect x="1048.0" y="717.1" width="7" height="39.9" fill="#00ab4e" shape-rendering="crispEdges"/>
<rect x="1059.0" y="721.1" width="7" height="35.9" fill="#00ab4e" shape-rendering="crispEdges"/>
<rect x="1070.0" y="728.0" width="7" height="29.0" fill="#00ab4e" shape-rendering="crispEdges"/>
<path d="M27.5 757.5H1101.5" stroke="#c9c9c9" stroke-width="1" shape-rendering="crispEdges"/>
<text x="1111.5" y="246.8" font-size="12" fill="#6a6a6a" textLength="53" lengthAdjust="spacing">14,000.00</text>
<text x="1111.5" y="310.8" font-size="12" fill="#6a6a6a" textLength="53" lengthAdjust="spacing">12,000.00</text>
<text x="1111.5" y="375.8" font-size="12" fill="#6a6a6a" textLength="53" lengthAdjust="spacing">10,000.00</text>
<text x="1117.3" y="439.8" font-size="12" fill="#6a6a6a" textLength="47.2" lengthAdjust="spacing">8,000.00</text>
<text x="1117.3" y="504.8" font-size="12" fill="#6a6a6a" textLength="47.2" lengthAdjust="spacing">6,000.00</text>
<text x="1117.3" y="568.8" font-size="12" fill="#6a6a6a" textLength="47.2" lengthAdjust="spacing">4,000.00</text>
<text x="1117.3" y="633.8" font-size="12" fill="#6a6a6a" textLength="47.2" lengthAdjust="spacing">2,000.00</text>
<text x="1136.1" y="699.8" font-size="12" fill="#6a6a6a" textLength="28.3" lengthAdjust="spacing">200K</text>
<text x="1149.7" y="761.8" font-size="12" fill="#6a6a6a" textLength="14.7" lengthAdjust="spacing">0K</text>
<text x="84.6" y="776.3" font-size="12" fill="#6a6a6a" textLength="29.8" lengthAdjust="spacing">Mar 4</text>
<text x="192.5" y="776.3" font-size="12" fill="#6a6a6a" textLength="36" lengthAdjust="spacing">Mar 18</text>
<text x="307.75" y="776.3" font-size="12" fill="#6a6a6a" textLength="27.5" lengthAdjust="spacing">Apr 1</text>
<text x="414.5" y="776.3" font-size="12" fill="#6a6a6a" textLength="34" lengthAdjust="spacing">Apr 15</text>
<text x="525.5" y="776.3" font-size="12" fill="#6a6a6a" textLength="34" lengthAdjust="spacing">Apr 29</text>
<text x="634.0" y="776.3" font-size="12" fill="#6a6a6a" textLength="37" lengthAdjust="spacing">May 13</text>
<text x="745.0" y="776.3" font-size="12" fill="#6a6a6a" textLength="37" lengthAdjust="spacing">May 27</text>
<text x="857.0" y="776.3" font-size="12" fill="#6a6a6a" textLength="33" lengthAdjust="spacing">Jun 10</text>
<text x="968.0" y="776.3" font-size="12" fill="#6a6a6a" textLength="33" lengthAdjust="spacing">Jun 24</text>
<path d="M1106.3 311.7L1111.4 303.2H1166V320.2H1111.4Z" fill="#00ab4e"/>
<text x="1111.3999999999999" y="316.0" font-size="12" fill="#fff" textLength="53.2" lengthAdjust="spacing">11,832.57</text>
<path d="M1106.3 416.6L1111.4 408.1H1166V425.1H1111.4Z" fill="#ee4426"/>
<text x="1117.3999999999999" y="420.90000000000003" font-size="12" fill="#fff" textLength="47.2" lengthAdjust="spacing">8,595.92</text>
<path d="M1106.3 486.4L1111.4 477.9H1166V494.9H1111.4Z" fill="#1a3cff"/>
<text x="1117.3999999999999" y="490.7" font-size="12" fill="#fff" textLength="47.2" lengthAdjust="spacing">6,416.72</text>
<path d="M1131.5 728.5L1136.5 720.0H1166.5V737.0H1136.5Z" fill="#00ab4e"/>
<text x="1143.3" y="732.8" font-size="12" fill="#fff" textLength="21.8" lengthAdjust="spacing">93K</text>
<rect x="928" y="780.6" width="8" height="1.4" fill="#444"/><rect x="1083.5" y="780.6" width="7.5" height="1.4" fill="#444"/>
</svg>
</div></body></html>
